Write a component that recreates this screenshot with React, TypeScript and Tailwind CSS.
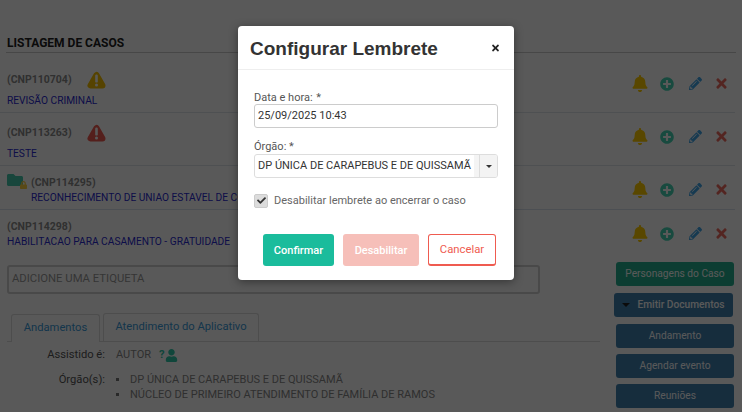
import type { ReactNode } from "react";
import { FaBell, FaPlusCircle, FaPencilAlt, FaTimes, FaUser, FaFolder, FaLock, FaCheck } from "react-icons/fa";

function Warn({ color }: { color: string }) {
  return (
    <svg width="19" height="18" viewBox="0 0 19 18">
      <path d="M9.5 4L3.5 14.5H15.5Z" fill={color} stroke={color} strokeWidth="6" strokeLinejoin="round" />
      <rect x="8.2" y="3.6" width="2.6" height="8" rx="1.2" fill="#fff" />
      <circle cx="9.5" cy="14" r="1.5" fill="#fff" />
    </svg>
  );
}

function Actions({ top }: { top: string }) {
  return (
    <div className={`flex items-center ml-auto pr-[7px] ${top}`}>
      <FaBell className="text-[#ffcc00] w-4 h-[17px]" />
      <FaPlusCircle className="text-[#45d4b4] w-[14px] h-[14px] ml-[12px]" />
      <FaPencilAlt className="text-[#3fa5e8] w-[13px] h-[13px] ml-[15px]" />
      <FaTimes className="text-[#ee6a5e] w-[13px] h-[15px] ml-[13px]" />
    </div>
  );
}

function Row({ code, name, icon, folder, cls, top, sub }: { code: string; name: string; icon?: string; folder?: boolean; cls: string; top: string; sub: string }) {
  return (
    <div className={`flex items-start pl-[7px] ${cls}`}>
      {folder && (
        <div className="relative w-[24px] h-[20px] -mt-[3px] shrink-0">
          <FaFolder className="text-[#45c8ac] w-[16px] h-[16px] absolute left-0 top-0" />
          <FaLock className="text-[#ffd040] w-[7px] h-[8px] absolute left-[13px] top-[9px]" />
        </div>
      )}
      <div className="flex flex-col flex-1 min-w-0">
        <div className="flex items-center h-[15px] text-[10.5px] font-bold text-[#8a8a8a]">
          <span>({code})</span>
          {icon && <span className="ml-[15px] flex"><Warn color={icon} /></span>}
        </div>
        <div className={`text-[10.2px] leading-[15px] text-[#2a2ad0] whitespace-nowrap ${sub}`}>{name}</div>
      </div>
      <Actions top={top} />
    </div>
  );
}

function Btn({ children, cls }: { children: ReactNode; cls: string }) {
  return (
    <div className={`h-[24px] rounded-[3px] flex items-center justify-center text-[10.2px] text-white ${cls}`}>{children}</div>
  );
}

export default function App() {
  return (
    <div className="relative w-[742px] h-[412px] overflow-hidden bg-white font-['Roboto',sans-serif]">
      <div className="flex flex-col h-full">
        <div className="h-[36px] shrink-0" />
        <div className="mx-[6px] pl-[1px] h-[17px] border-b border-[#ccc] text-[12px] leading-[14px] font-bold text-[#222] shrink-0">LISTAGEM DE CASOS</div>
        <div className="-mt-[1px] mr-[7px] flex flex-col">
          <Row code="CNP110704" name="REVISÃO CRIMINAL" icon="#f5c000" cls="h-[61px] pt-[20px] border-b border-[#dfe5ec]" top="mt-[3px]" sub="mt-[6px]" />
          <Row code="CNP113263" name="TESTE" icon="#ef5b50" cls="h-[53px] pt-[12px] border-b border-[#dfe5ec]" top="mt-[3px]" sub="mt-[6px]" />
          <Row folder code="CNP114295" name="RECONHECIMENTO DE UNIAO ESTAVEL DE CONVIVENTES" cls="h-[44px] pt-[9px] border-b border-[#d9e3ee]" top="mt-[6px]" sub="mt-0" />
          <Row code="CNP114298" name="HABILITACAO PARA CASAMENTO - GRATUIDADE" cls="h-[55px] pt-[9px]" top="mt-[6px]" sub="mt-0" />
        </div>
        <div className="flex flex-1">
          <div className="w-[600px] pl-[7px] flex flex-col">
            <div className="w-[533px] h-[29px] border-2 border-[#d0d0d0] rounded-[3px] flex items-center pl-[3px] text-[11.3px] text-[#999]">ADICIONE UMA ETIQUETA</div>
            <div className="mt-[20px] flex items-end h-[28px] border-b border-[#ddd] pl-[4px] gap-[3px] text-[11.2px] text-[#3a9ad9]">
              <div className="h-[28px] w-[89px] border border-b-0 border-[#ddd] rounded-t-[3px] flex items-center justify-center bg-white -mb-[1px]">Andamentos</div>
              <div className="h-[28px] w-[156px] border border-b-0 border-[#ddd] rounded-t-[3px] flex items-center justify-center">Atendimento do Aplicativo</div>
            </div>
            <div className="flex items-center mt-[5px] h-[17px] text-[11.2px]">
              <span className="w-[98px] text-right text-[#555]">Assistido é:</span>
              <span className="ml-[11px] text-[#888] text-[11px]">AUTOR</span>
              <span className="ml-[8px] text-[#2fc8a8] font-bold">?</span>
              <FaUser className="text-[#2fc8a8] w-[13px] h-[13px]" />
            </div>
            <div className="flex mt-[8px] text-[11px] leading-[15px]">
              <span className="w-[98px] text-right text-[#555] shrink-0 text-[11.2px]">Órgão(s):</span>
              <ul className="ml-[11px] text-[#888] whitespace-nowrap">
                <li className="flex items-center"><span className="w-[3px] h-[3px] bg-[#777] mr-[11px]" />DP ÚNICA DE CARAPEBUS E DE QUISSAMÃ</li>
                <li className="flex items-center"><span className="w-[3px] h-[3px] bg-[#777] mr-[11px]" />NÚCLEO DE PRIMEIRO ATENDIMENTO DE FAMÍLIA DE RAMOS</li>
              </ul>
            </div>
          </div>
          <div className="w-[118px] ml-[16px] flex flex-col -mt-[3px]">
            <Btn cls="bg-[#23b090]">Personagens do Caso</Btn>
            <Btn cls="bg-[#3f82b0] mt-[7px] -ml-[2px] w-[119px] h-[23px] font-medium">
              <span className="w-0 h-0 border-x-[4px] border-x-transparent border-t-[4px] border-t-[#222] mr-[7px]" />Emitir Documentos
            </Btn>
            <Btn cls="bg-[#3f82b0] mt-[7px]">Andamento</Btn>
            <Btn cls="bg-[#3f82b0] mt-[6px]">Agendar evento</Btn>
            <Btn cls="bg-[#3f82b0] mt-[6px]">Reuniões</Btn>
          </div>
        </div>
      </div>

      <div className="absolute inset-0 bg-black/65" />

      <div className="absolute left-[238px] top-[26px] w-[276px] h-[254px] bg-white rounded-[4px] shadow-[0_2px_10px_rgba(0,0,0,0.4)]">
        <div className="h-[44px] border-b border-[#eee] flex items-center justify-between pl-[12px] pr-[14px]">
          <span className="font-['Liberation_Sans',sans-serif] font-bold text-[19px] text-[#333] pt-[4px]">Configurar Lembrete</span>
          <FaTimes className="w-[9px] h-[10px] text-[#222]" />
        </div>
        <div className="px-[16px] pt-[21px] text-[11px] text-[#555]">
          <div className="leading-[14px] -mb-[1px]">Data e hora: <span className="ml-[1px]">*</span></div>
          <div className="h-[24px] border border-[#ccc] rounded-[3px] flex items-center pl-[3px] pt-[1px] text-[#333]">25/09/2025 10:43</div>
          <div className="mt-[12px] leading-[14px]">Órgão: *</div>
          <div className="h-[24px] border border-[#ddd] rounded-[3px] flex items-center text-[#333] overflow-hidden">
            <span className="flex-1 pl-[3px] pt-[1px] whitespace-nowrap">DP ÚNICA DE CARAPEBUS E DE QUISSAMÃ</span>
            <span className="w-[5px] h-full bg-[#f4f4f4]" />
            <span className="w-[18px] h-full bg-[#f3f3f3] border-l border-[#ddd] flex items-center justify-center">
              <span className="w-0 h-0 border-x-[3.5px] border-x-transparent border-t-[3.5px] border-t-[#333]" />
            </span>
          </div>
          <div className="flex items-center mt-[15px] h-[15px]">
            <span className="w-[14px] h-[14px] rounded-[2px] bg-[#dcdcdc] border border-[#ccc] flex items-center justify-center">
              <FaCheck className="w-[9px] h-[9px] text-[#333]" />
            </span>
            <span className="ml-[6px] pt-[2px] text-[#666]">Desabilitar lembrete ao encerrar o caso</span>
          </div>
          <div className="flex mt-[26px] ml-[9px] h-[32px] text-[11px] font-medium">
            <div className="w-[71px] rounded-[3px] bg-[#1abc9c] text-white flex items-center justify-center pt-[2px]">Confirmar</div>
            <div className="w-[76px] ml-[9px] rounded-[3px] bg-[#f6bfb9] text-white flex items-center justify-center pt-[2px]">Desabilitar</div>
            <div className="w-[68px] ml-[9px] rounded-[3px] border border-[#ef5b50] border-b-2 bg-white text-[#ef5b50] flex items-center justify-center font-normal text-[11.3px] pt-[2px]">Cancelar</div>
          </div>
        </div>
      </div>
    </div>
  );
}
